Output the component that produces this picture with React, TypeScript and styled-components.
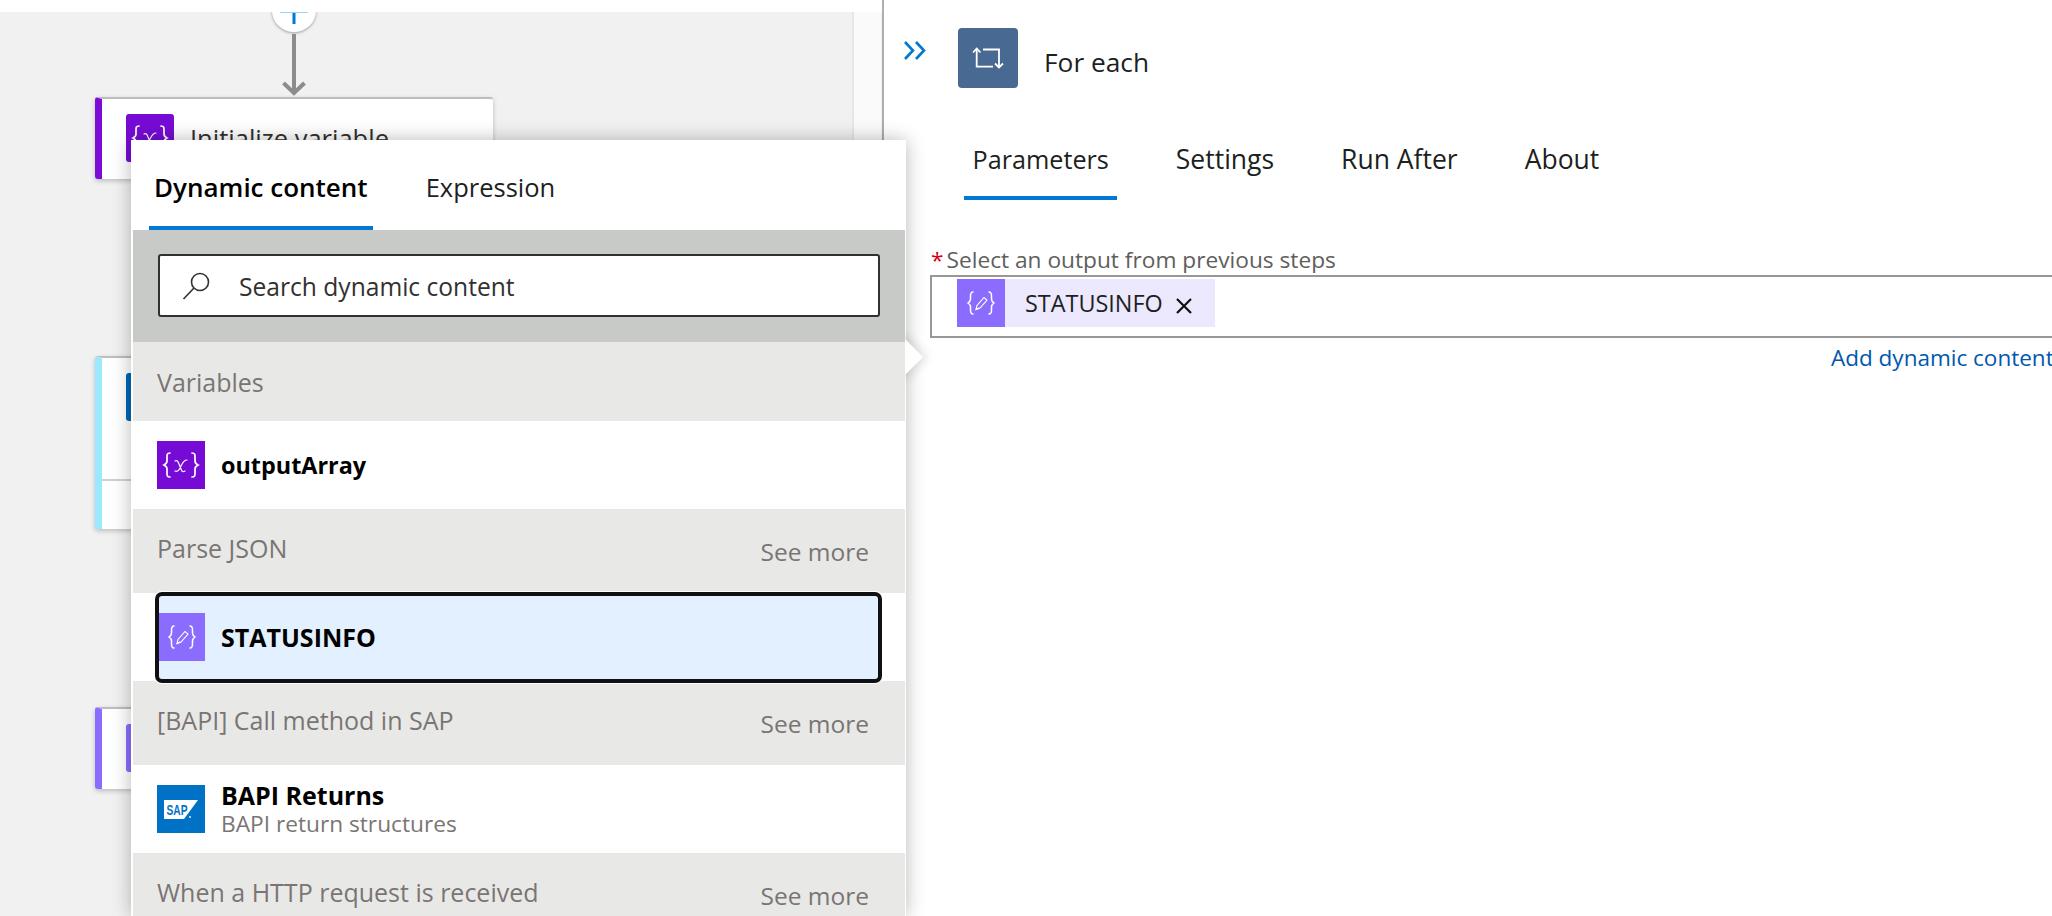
import React from "react";
import styled, { createGlobalStyle } from "styled-components";

const Global = createGlobalStyle`
  html, body { margin: 0; padding: 0; background: #fff; overflow: hidden; }
  * { box-sizing: border-box; }
  body { font-family: "Open Sans", "Liberation Sans", sans-serif; }
`;

const Page = styled.div`
  position: relative;
  display: flex;
  width: 2052px;
  height: 916px;
  overflow: hidden;
  background: #fff;
`;

const Designer = styled.div`
  display: flex;
  flex-direction: column;
  width: 884px;
  height: 100%;
  flex: none;
  border-right: 2px solid #aeaeae;
`;

const TopBand = styled.div`
  height: 12px;
  flex: none;
  background: #fff;
  position: relative;
  z-index: 1;
`;

const CanvasRow = styled.div`
  flex: 1;
  display: flex;
  min-height: 0;
`;

const Canvas = styled.div`
  width: 852px;
  flex: none;
  background: #f1f1f1;
  padding-left: 95px;
`;

const ScrollStrip = styled.div`
  flex: 1;
  background: #fafafa;
  border-left: 2px solid #e6e6e6;
  border-right: 1px solid #f0f0f0;
`;

const FlowColumn = styled.div`
  width: 398px;
  display: flex;
  flex-direction: column;
  align-items: center;
`;

const AddCircle = styled.div`
  width: 44px;
  height: 42px;
  margin-top: -22px;
  flex: none;
  border-radius: 50%;
  background: #fff;
  box-shadow: 0 1px 3px rgba(0, 0, 0, 0.35);
  display: flex;
  align-items: center;
  justify-content: center;
`;

const Connector = styled.svg`
  display: block;
  width: 26px;
  height: 65px;
  flex: none;
`;

const Card = styled.div<{ $accent: string; $height: number; $mt?: number }>`
  width: 100%;
  height: ${(p) => p.$height}px;
  margin-top: ${(p) => p.$mt ?? 0}px;
  flex: none;
  background: #fff;
  border-top: 2px solid #bdbdbd;
  border-left: 7px solid ${(p) => p.$accent};
  border-radius: 3px;
  box-shadow: 0 2px 5px rgba(0, 0, 0, 0.22);
  display: flex;
  flex-direction: column;
`;

const CardHeader = styled.div<{ $height: number }>`
  height: ${(p) => p.$height}px;
  flex: none;
  padding: 15px 24px 0;
  display: flex;
  align-items: flex-start;
  gap: 16px;
  border-bottom: ${(p) => (p.$height > 100 ? "2px solid #d0d0d0" : "none")};
`;

const CardIcon = styled.div<{ $bg: string }>`
  width: 48px;
  height: 48px;
  flex: none;
  border-radius: 3px;
  background: ${(p) => p.$bg};
  display: flex;
  align-items: center;
  justify-content: center;
`;

const CardTitle = styled.div`
  font-size: 25.5px;
  line-height: 48px;
  color: #323130;
  white-space: nowrap;
`;

const Popup = styled.div`
  position: absolute;
  left: 131px;
  top: 140px;
  bottom: 0;
  width: 775px;
  z-index: 5;
  background: #fff;
  padding: 0 1px 0 2px;
  box-shadow: 0 0 18px rgba(0, 0, 0, 0.28);
  display: flex;
  flex-direction: column;
`;

const Caret = styled.div`
  position: absolute;
  left: calc(100% - 24px);
  top: 200px;
  width: 34px;
  height: 34px;
  background: #fff;
  transform: rotate(45deg);
  box-shadow: 4px -4px 10px rgba(0, 0, 0, 0.1);
`;

const PopupTabs = styled.div`
  height: 90px;
  flex: none;
  padding-left: 16px;
  display: flex;
  gap: 48px;
  position: relative;
  background: #fff;
`;

const PopupTab = styled.div<{ $active?: boolean }>`
  height: 90px;
  padding: 0 5px;
  font-size: ${(p) => (p.$active ? 26 : 25.5)}px;
  line-height: 94px;
  font-weight: ${(p) => (p.$active ? 600 : 400)};
  color: ${(p) => (p.$active ? "#000" : "#201f1e")};
  border-bottom: 4px solid ${(p) => (p.$active ? "#0078d4" : "transparent")};
  white-space: nowrap;
`;

const SearchBand = styled.div`
  height: 112px;
  flex: none;
  background: #c8cac7;
  padding: 24px 25px 25px;
  position: relative;
`;

const SearchBox = styled.div`
  height: 63px;
  background: #fff;
  border: 2px solid #323130;
  border-radius: 3px;
  padding-left: 22px;
  display: flex;
  align-items: center;
  gap: 29px;
`;

const SearchText = styled.span`
  font-size: 24.6px;
  color: #323130;
  white-space: nowrap;
  margin-top: 1px;
`;

const GroupHeader = styled.div<{ $height: number }>`
  height: ${(p) => p.$height}px;
  flex: none;
  background: #e8e9e6;
  padding: 0 36px 0 24px;
  display: flex;
  justify-content: space-between;
  align-items: center;
  font-size: 25px;
  color: #7a7574;
  position: relative;
`;

const GroupName = styled.span<{ $up: number }>`
  margin-top: -${(p) => p.$up}px;
  white-space: nowrap;
`;

const SeeMore = styled.span`
  font-size: 24.5px;
  margin-top: 1px;
  white-space: nowrap;
`;

const Row = styled.div<{ $selected?: boolean }>`
  height: 88px;
  flex: none;
  position: relative;
  background: #fff;
  padding-left: 24px;
  display: flex;
  align-items: center;
  gap: 16px;
  z-index: ${(p) => (p.$selected ? 2 : 0)};
`;

const Highlight = styled.div`
  position: absolute;
  inset: -1px 23px -2px 22px;
  background: #e3f0ff;
  border: 4px solid #111;
  border-radius: 7px;
  box-shadow: 0 0 0 1px #fff;
`;

const RowIcon = styled.div<{ $bg: string; $inset?: boolean }>`
  width: ${(p) => (p.$inset ? 46 : 48)}px;
  height: 48px;
  margin-left: ${(p) => (p.$inset ? 2 : 0)}px;
  flex: none;
  position: relative;
  background: ${(p) => p.$bg};
  display: flex;
  align-items: center;
  justify-content: center;
`;

const RowText = styled.div`
  position: relative;
  display: flex;
  flex-direction: column;
`;

const RowTitle = styled.div<{ $size?: number }>`
  font-size: ${(p) => p.$size ?? 25}px;
  line-height: 30px;
  font-weight: 700;
  color: #000;
  white-space: nowrap;
`;

const RowSub = styled.div`
  font-size: 22.7px;
  line-height: 28px;
  color: #7a7574;
  white-space: nowrap;
`;

const Panel = styled.div`
  flex: 1;
  min-width: 0;
  display: flex;
  flex-direction: column;
  overflow: hidden;
`;

const PanelHead = styled.div`
  height: 88px;
  flex: none;
  padding: 28px 0 0 19px;
  display: flex;
  align-items: flex-start;
`;

const Collapse = styled.svg`
  width: 24px;
  height: 20px;
  margin-top: 13px;
  flex: none;
`;

const LoopIcon = styled.div`
  width: 60px;
  height: 60px;
  margin-left: 31px;
  flex: none;
  border-radius: 4px;
  background: #486991;
  display: flex;
  align-items: center;
  justify-content: center;
`;

const PanelTitle = styled.div`
  margin-left: 26px;
  font-size: 26.3px;
  line-height: 68px;
  color: #201f1e;
`;

const PanelTabs = styled.div`
  margin: 50px 0 0 80px;
  height: 62px;
  flex: none;
  display: flex;
  gap: 50px;
`;

const PanelTab = styled.div<{ $active?: boolean }>`
  height: 62px;
  padding: 0 8.5px;
  font-size: ${(p) => (p.$active ? 25.2 : 26.5)}px;
  line-height: 43px;
  color: #201f1e;
  border-bottom: 4px solid ${(p) => (p.$active ? "#0078d4" : "transparent")};
  white-space: nowrap;
`;

const Field = styled.div`
  margin: 46px 0 0 46px;
  display: flex;
  flex-direction: column;
`;

const Label = styled.div`
  height: 29px;
  font-size: 22.7px;
  line-height: 28px;
  color: #605e5c;
  white-space: nowrap;
`;

const Star = styled.span`
  color: #d0021b;
  margin: 0 3px 0 1px;
`;

const TokenInput = styled.div`
  width: 1400px;
  height: 63px;
  border: 2px solid #979797;
  padding: 2px 0 0 25px;
  display: flex;
  align-items: flex-start;
`;

const Token = styled.div`
  height: 48px;
  width: 258px;
  background: #ece8fd;
  display: flex;
  align-items: center;
`;

const TokenIcon = styled.div`
  width: 48px;
  height: 48px;
  flex: none;
  background: #8c6cff;
  display: flex;
  align-items: center;
  justify-content: center;
`;

const TokenText = styled.span`
  margin-left: 20px;
  font-size: 23.4px;
  color: #201f1e;
  white-space: nowrap;
`;

const TokenClose = styled.svg`
  width: 18px;
  height: 18px;
  margin: 5px 0 0 12px;
  flex: none;
`;

const AddLink = styled.div`
  margin: 5px 0 0 901px;
  font-size: 22.5px;
  line-height: 30px;
  color: #0058ad;
  white-space: nowrap;
`;

const VarGlyph = () => (
  <svg width={40} height={40} viewBox="0 0 40 40" fill="none" stroke="#fff" strokeWidth="1.7" strokeLinecap="round">
    <path d="M9 8c-3 0-3 1.500-3 4v4c0 2-1 3-3 4 2 1 3 2 3 4v4c0 2.500 0 4 3 4" />
    <path d="M31 8c3 0 3 1.500 3 4v4c0 2 1 3 3 4-2 1-3 2-3 4v4c0 2.500 0 4-3 4" />
    <path d="M14 16c2-1 3 0 4 3l2 5c1 3 2 3 4 2M26 15c-2 0-3.500 1-5.500 5l-2 4c-1 2-2.500 3-4.500 2" strokeWidth="1.2" />
  </svg>
);

const PencilGlyph = () => (
  <svg width={34} height={34} viewBox="0 0 34 34" fill="none" stroke="#fff" strokeWidth="1.5" strokeLinecap="round">
    <path d="M9 6c-2.500 0-2.500 2-2.500 4v3c0 2-1 3-2.500 4 1.500 1 2.500 2 2.500 4v3c0 2 0 4 2.500 4" />
    <path d="M25 6c2.500 0 2.500 2 2.500 4v3c0 2 1 3 2.500 4-1.500 1-2.500 2-2.500 4v3c0 2 0 4-2.500 4" />
    <path d="M12 23.500l1-4 7-8 3 2.500-7 8z" strokeWidth="1.1" />
    <path d="M12 23.500l3-1.500" strokeWidth="1.1" />
  </svg>
);

const SapGlyph = () => (
  <svg width="48" height="48" viewBox="0 0 48 48">
    <polygon points="7,15 41,15 27,34 7,34" fill="#fff" />
    <text x="9.500" y="30" fontFamily="Liberation Sans, sans-serif" fontWeight="700" fontSize="14" fill="#0072c6" textLength="21" lengthAdjust="spacingAndGlyphs">SAP</text>
    <circle cx="33" cy="32" r="0.900" fill="#fff" />
  </svg>
);

export default function App() {
  return (
    <Page>
      <Global />
      <Designer>
        <TopBand />
        <CanvasRow>
          <Canvas>
            <FlowColumn>
              <AddCircle>
                <svg width="28" height="26" viewBox="0 0 28 26">
                  <path d="M14 0v26" stroke="#0078d4" strokeWidth="3" />
                  <path d="M0 14.500h28" stroke="#9fd0f5" strokeWidth="1" />
                </svg>
              </AddCircle>
              <Connector viewBox="0 0 26 65">
                <path d="M13 2V62" stroke="#8c8c8c" strokeWidth="4" fill="none" />
                <path d="M2.500 51l10.500 10 10.500-10" stroke="#8c8c8c" strokeWidth="4" fill="none" />
              </Connector>
              <Card $accent="#7a0cd6" $height={82}>
                <CardHeader $height={80}>
                  <CardIcon $bg="#770bd6"><VarGlyph /></CardIcon>
                  <CardTitle>Initialize variable</CardTitle>
                </CardHeader>
              </Card>
              <Card $accent="#9be9ff" $height={173} $mt={177}>
                <CardHeader $height={123}>
                  <CardIcon $bg="#0067b5" />
                </CardHeader>
              </Card>
              <Card $accent="#8c6cff" $height={82} $mt={178}>
                <CardHeader $height={80}>
                  <CardIcon $bg="#8c6cff" />
                </CardHeader>
              </Card>
            </FlowColumn>
          </Canvas>
          <ScrollStrip />
        </CanvasRow>
      </Designer>

      <Panel>
        <PanelHead>
          <Collapse viewBox="0 0 24 20" fill="none" stroke="#0078d4" strokeWidth="2.600">
            <path d="M2 1l8 8.500-8 8.500M13 1l8 8.500-8 8.500" />
          </Collapse>
          <LoopIcon>
            <svg width="60" height="60" viewBox="0 0 60 60" fill="none" stroke="#fff" strokeWidth="1.800">
              <path d="M18.700 21V38.700H35M25 21.500H41V39" />
              <path d="M15 24.500l3.700-4 3.700 4M37 35.500l4 4 4-4" />
            </svg>
          </LoopIcon>
          <PanelTitle>For each</PanelTitle>
        </PanelHead>
        <PanelTabs>
          <PanelTab $active>Parameters</PanelTab>
          <PanelTab>Settings</PanelTab>
          <PanelTab>Run After</PanelTab>
          <PanelTab>About</PanelTab>
        </PanelTabs>
        <Field>
          <Label><Star>*</Star>Select an output from previous steps</Label>
          <TokenInput>
            <Token>
              <TokenIcon><PencilGlyph /></TokenIcon>
              <TokenText>STATUSINFO</TokenText>
              <TokenClose viewBox="0 0 18 18" stroke="#111" strokeWidth="2.200">
                <path d="M2 2l14 14M16 2L2 16" />
              </TokenClose>
            </Token>
          </TokenInput>
          <AddLink>Add dynamic content</AddLink>
        </Field>
      </Panel>

      <Popup>
        <Caret />
        <PopupTabs>
          <PopupTab $active>Dynamic content</PopupTab>
          <PopupTab>Expression</PopupTab>
        </PopupTabs>
        <SearchBand>
          <SearchBox>
            <svg width="28" height="28" viewBox="0 0 28 28" fill="none" stroke="#323130" strokeWidth="1.600">
              <circle cx="18" cy="10" r="8.500" />
              <path d="M12 16L1.500 27" />
            </svg>
            <SearchText>Search dynamic content</SearchText>
          </SearchBox>
        </SearchBand>
        <GroupHeader $height={79}><GroupName $up={0}>Variables</GroupName></GroupHeader>
        <Row>
          <RowIcon $bg="#770bd6"><VarGlyph /></RowIcon>
          <RowText><RowTitle $size={23.4}>outputArray</RowTitle></RowText>
        </Row>
        <GroupHeader $height={84}><GroupName $up={6}>Parse JSON</GroupName><SeeMore>See more</SeeMore></GroupHeader>
        <Row $selected>
          <Highlight />
          <RowIcon $bg="#8c6cff" $inset><PencilGlyph /></RowIcon>
          <RowText><RowTitle>STATUSINFO</RowTitle></RowText>
        </Row>
        <GroupHeader $height={84}><GroupName $up={6}>[BAPI] Call method in SAP</GroupName><SeeMore>See more</SeeMore></GroupHeader>
        <Row>
          <RowIcon $bg="#0072c6"><SapGlyph /></RowIcon>
          <RowText>
            <RowTitle>BAPI Returns</RowTitle>
            <RowSub>BAPI return structures</RowSub>
          </RowText>
        </Row>
        <GroupHeader $height={84}><GroupName $up={6}>When a HTTP request is received</GroupName><SeeMore>See more</SeeMore></GroupHeader>
      </Popup>
    </Page>
  );
}
